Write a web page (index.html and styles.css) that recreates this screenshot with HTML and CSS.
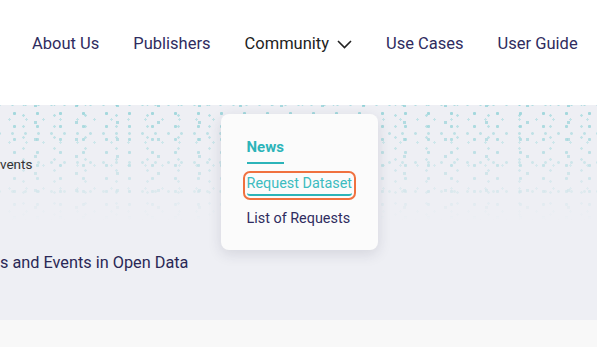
FILE: index.html
```html
<!DOCTYPE html>
<html lang="en">
<head>
    <meta charset="UTF-8">
    <meta name="viewport" content="width=device-width, initial-scale=1.0">
    <title>Open Data Portal</title>
    <link rel="stylesheet" href="styles.css">
</head>

<body>

    <header class="topo">
        <nav class="menu">
            <a href="#" class="menu-link">About Us</a>
            <a href="#" class="menu-link">Publishers</a>
            <div class="menu-item">
                <a href="#" class="menu-link comunidade">
                    Community
                    <svg class="seta" width="15" height="9" viewBox="0 0 15 9">
                        <path d="M1 1 L7.5 7.5 L14 1" fill="none" stroke="#222" stroke-width="1.6"/>
                    </svg>
                </a>
                <!-- Submenu aberto -->
                <div class="submenu">
                    <a href="#" class="sub-link ativo">News</a>
                    <a href="#" class="sub-link destaque">Request Dataset</a>
                    <a href="#" class="sub-link">List of Requests</a>
                </div>
            </div>
            <a href="#" class="menu-link">Use Cases</a>
            <a href="#" class="menu-link">User Guide</a>
        </nav>
    </header>

    <section class="faixa">
        <div class="pontos"></div>
        <p class="subtitulo">vents</p>
        <h2 class="titulo">s and Events in Open Data</h2>
    </section>

    <section class="rodape"></section>

</body>
</html>
```

FILE: styles.css
```css
* {
    font-family: Roboto, "Liberation Sans", sans-serif;
    margin: 0;
    padding: 0;
    box-sizing: border-box;
}

body {
    background-color: #f8f8f8;
    width: 597px;
    height: 347px;
    overflow: hidden;
}

a {
    text-decoration: none;
}

/* Cabeçalho */
.topo {
    background-color: #fff;
    height: 105px;
    position: relative;
    z-index: 2;
}

.menu {
    display: flex;
    align-items: center;
    gap: 34px;
    padding: 34px 0 0 32px;
}

.menu-link {
    font-size: 16.5px;
    line-height: 20px;
    color: #2f2c60;
    display: flex;
    align-items: center;
    gap: 8px;
}

.menu-link.comunidade {
    color: #222;
}

.menu-item {
    position: relative;
}

.seta {
    margin-top: 1px;
}

/* Submenu */
.submenu {
    position: absolute;
    top: 80px;
    left: -24px;
    width: 157px;
    height: 136px;
    background-color: #fbfbfb;
    border-radius: 8px;
    box-shadow: 0 4px 14px rgba(40, 40, 70, 0.13);
    padding: 24px 0 0 26px;
    display: flex;
    flex-direction: column;
    align-items: flex-start;
}

.sub-link {
    font-size: 14.4px;
    line-height: 18px;
    color: #2f2c60;
}

.sub-link.ativo {
    font-size: 15px;
    font-weight: bold;
    color: #2cb4b9;
    padding-bottom: 6px;
    border-bottom: 2px solid #2cb4b9;
}

.sub-link.destaque {
    margin-top: 11px;
    color: #3cbcc0;
    padding-bottom: 1px;
    border-bottom: 2px solid #2cb4b9;
    outline: 2px solid #f0713f;
    outline-offset: 2px;
    border-radius: 3px;
}

.sub-link:last-child {
    margin-top: 14px;
}

/* Faixa com pontos */
.faixa {
    height: 215px;
    background-color: #eeeff4;
    position: relative;
    overflow: hidden;
}

.pontos {
    position: absolute;
    left: 0;
    top: 0;
    width: 100%;
    height: 115px;
    background-image:
        radial-gradient(circle, rgba(130, 205, 210, 0.75) 1.3px, transparent 1.8px),
        radial-gradient(circle, rgba(140, 210, 214, 0.6) 1px, transparent 1.5px),
        radial-gradient(circle, rgba(120, 200, 206, 0.6) 1.6px, transparent 2px),
        radial-gradient(circle, rgba(150, 214, 218, 0.55) 1px, transparent 1.4px),
        radial-gradient(circle, rgba(135, 208, 212, 0.6) 1.2px, transparent 1.6px);
    background-size: 23px 13px, 31px 11px, 41px 17px, 17px 23px, 13px 29px;
    background-position: 3px 2px, 8px 5px, 15px 9px, 1px 3px, 6px 14px;
    -webkit-mask-image: linear-gradient(to bottom, #000 0%, rgba(0, 0, 0, 0.55) 45%, transparent 100%);
    mask-image: linear-gradient(to bottom, #000 0%, rgba(0, 0, 0, 0.55) 45%, transparent 100%);
}

.subtitulo {
    position: relative;
    margin: 50px 0 0 0;
    font-size: 13.5px;
    line-height: 18px;
    color: #333;
}

.titulo {
    position: relative;
    margin: 79px 0 0 0;
    font-size: 16.3px;
    line-height: 22px;
    font-weight: normal;
    color: #2a2856;
}

.rodape {
    height: 27px;
    background-color: #f8f8f8;
}
```
